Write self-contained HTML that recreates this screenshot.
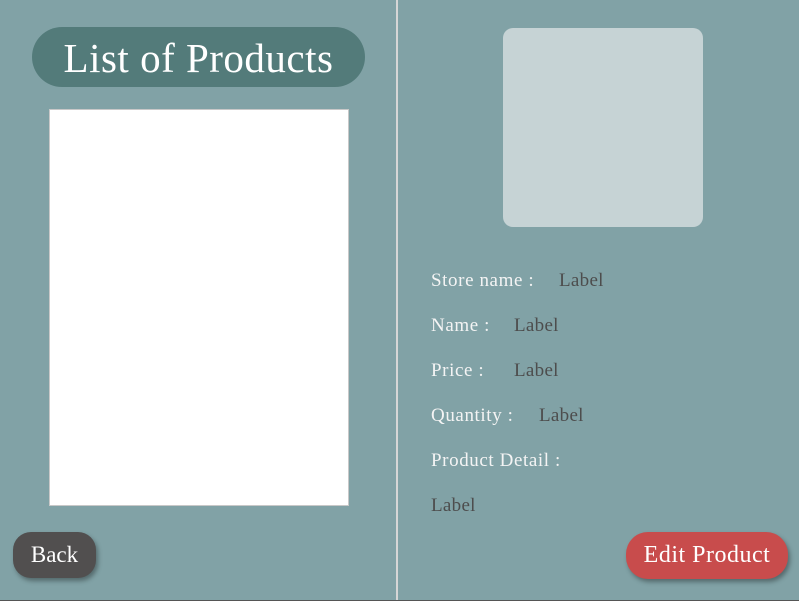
<!DOCTYPE html>
<html><head><style>
body{margin:0;width:799px;height:601px;background:#81a2a6;position:relative;overflow:hidden;font-family:"Liberation Serif",serif;}
.a{position:absolute;white-space:nowrap}
.t{color:#f4f4f4;font-size:19px;line-height:20px;letter-spacing:0.6px}
.l{color:#4d4d4d;font-size:19px;line-height:20px;letter-spacing:0.3px}
</style></head><body>
<div class="a" style="left:396px;top:0;width:2px;height:601px;background:#d6d6d6"></div>
<div class="a" style="left:0;top:600px;width:799px;height:1px;background:#555"></div>
<div class="a" style="left:32px;top:27px;width:333px;height:60px;border-radius:30px;background:#537b7a;color:#fff;font-size:41px;line-height:62px;text-align:center;letter-spacing:0.5px">List of Products</div>
<div class="a" style="left:49px;top:109px;width:298px;height:395px;background:#fff;border:1px solid #c8c8c8"></div>
<div class="a" style="left:13px;top:532px;width:83px;height:46px;border-radius:18px;background:#514f4f;color:#fff;font-size:23px;line-height:46px;text-align:center;box-shadow:2px 3px 5px rgba(0,0,0,.35)">Back</div>
<div class="a" style="left:626px;top:532px;width:162px;height:47px;border-radius:22px;background:#c84c4c;color:#fff;font-size:24px;line-height:47px;text-align:center;letter-spacing:0.5px;box-shadow:2px 3px 5px rgba(0,0,0,.35)">Edit Product</div>
<div class="a" style="left:503px;top:28px;width:200px;height:199px;border-radius:10px;background:#c6d3d5"></div>
<div class="a t" style="left:431px;top:271px">Store name :</div><div class="a l" style="left:559px;top:271px">Label</div>
<div class="a t" style="left:431px;top:316px">Name :</div><div class="a l" style="left:514px;top:316px">Label</div>
<div class="a t" style="left:431px;top:361px">Price :</div><div class="a l" style="left:514px;top:361px">Label</div>
<div class="a t" style="left:431px;top:406px">Quantity :</div><div class="a l" style="left:539px;top:406px">Label</div>
<div class="a t" style="left:431px;top:451px">Product Detail :</div>
<div class="a l" style="left:431px;top:496px">Label</div>
</body></html>
